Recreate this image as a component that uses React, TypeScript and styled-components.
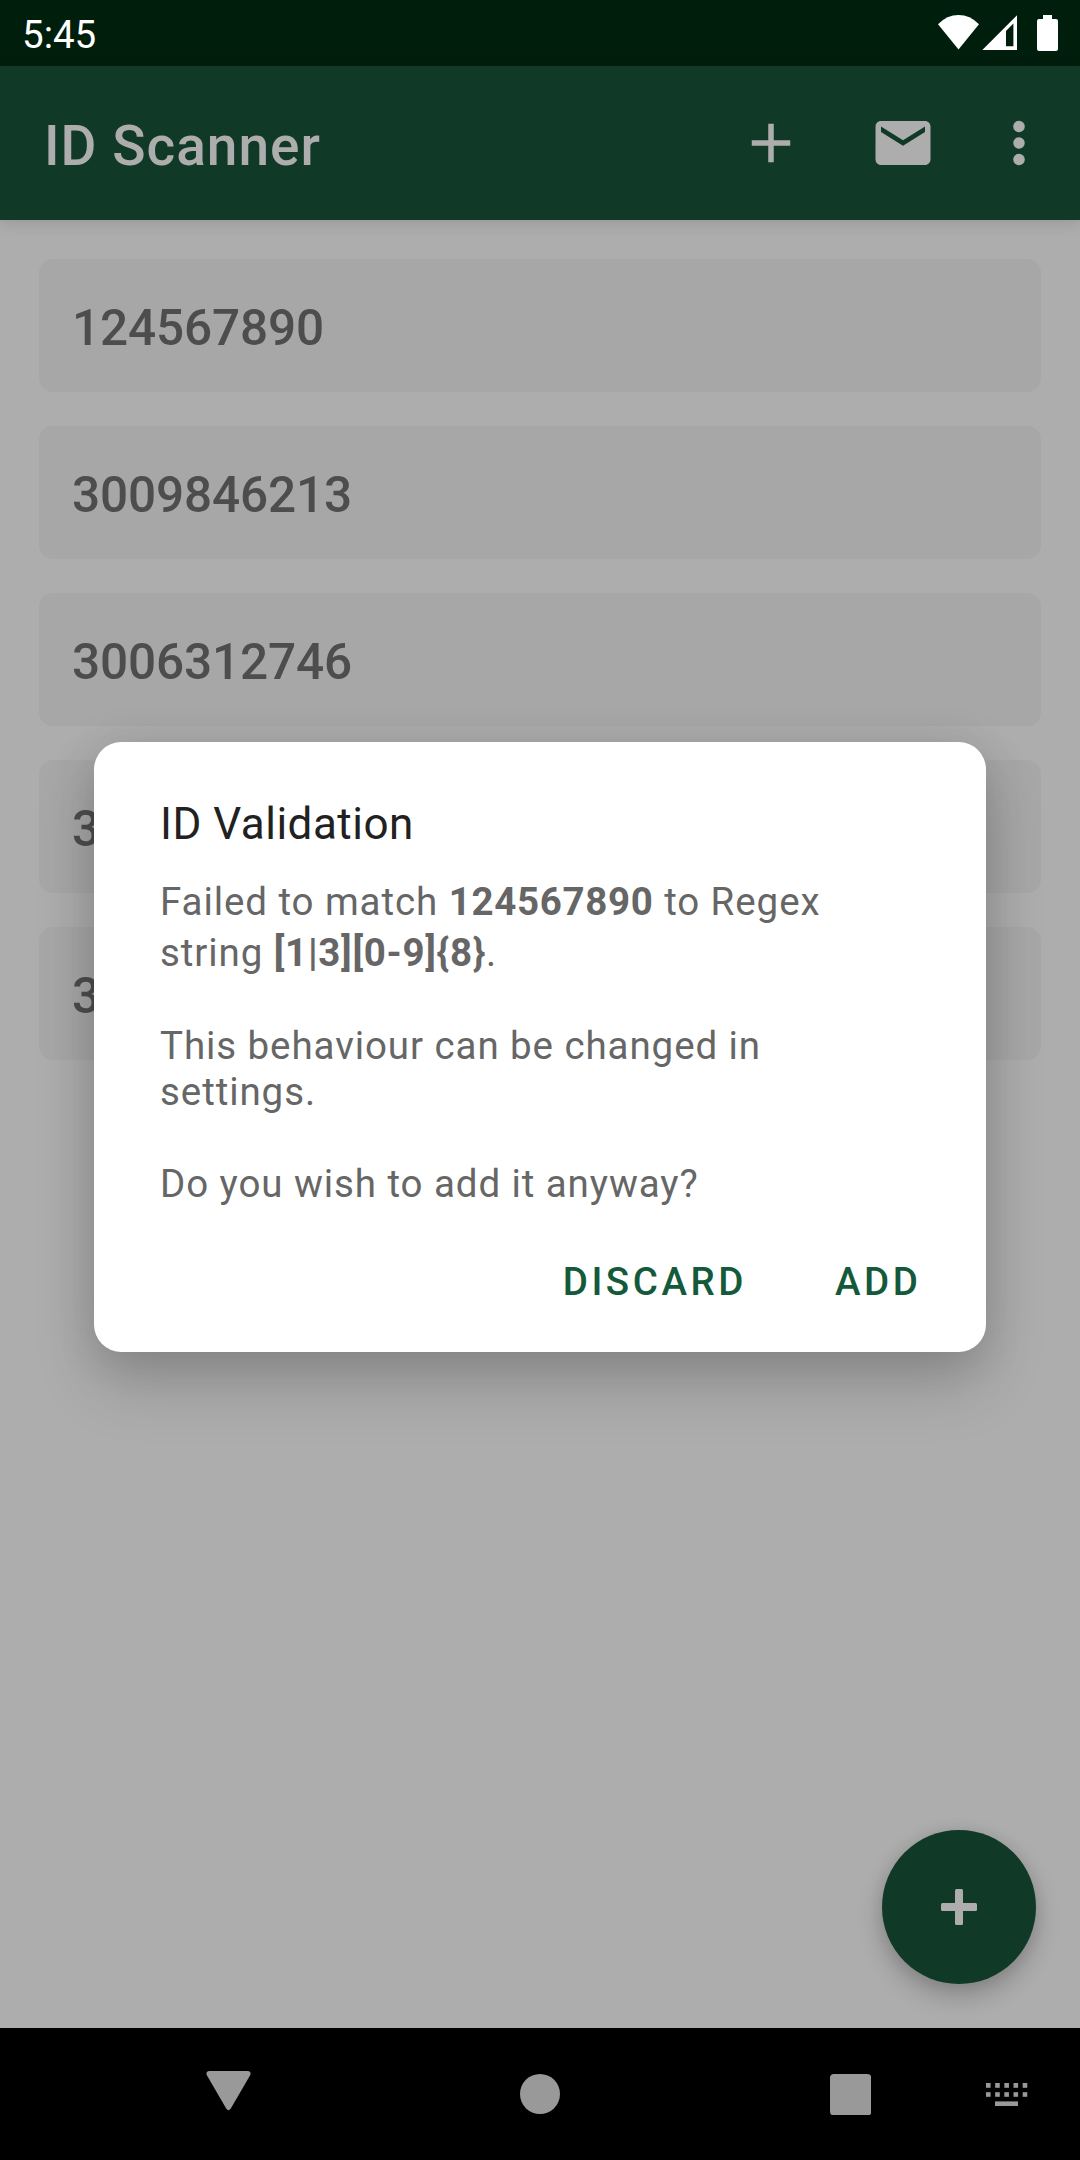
import React from "react";
import styled, { createGlobalStyle } from "styled-components";

const color = {
  status: "#001e0c",
  primary: "#103a27",
  action: "#145a3a",
  page: "#adadad",
  card: "#a7a7a7",
  cardText: "#4d4d4d",
  nav: "#999999",
};

const GlobalStyle = createGlobalStyle`
  * { box-sizing: border-box; }
  body { margin: 0; background: ${color.page}; }
  button { border: 0; padding: 0; background: none; font: inherit; color: inherit; }
  svg { display: block; flex: none; }
`;

const Screen = styled.div`
  position: relative;
  display: flex;
  flex-direction: column;
  width: 1080px;
  height: 2160px;
  overflow: hidden;
  background: ${color.page};
  font-family: Roboto, "Liberation Sans", sans-serif;
`;

const StatusBar = styled.header`
  display: flex;
  flex: none;
  justify-content: space-between;
  height: 66px;
  padding: 0 22px;
  background: ${color.status};
  color: #fff;
`;

const Clock = styled.span`
  font-size: 38.5px;
  line-height: 70px;
`;

const StatusIcons = styled.div`
  display: flex;
  padding-top: 15px;
`;

const AppBar = styled.div`
  display: flex;
  flex: none;
  align-items: center;
  height: 154px;
  padding: 0 28px 0 44px;
  background: ${color.primary};
  color: ${color.page};
  box-shadow: 0 3px 14px rgba(0, 0, 0, 0.12);
  z-index: 1;
`;

const AppTitle = styled.h1`
  flex: 1;
  margin: 0;
  font-size: 55px;
  font-weight: 500;
  line-height: 64px;
  padding-top: 5px;
  letter-spacing: 1px;
`;

const IconButton = styled.button<{ $gap: number }>`
  width: 66px;
  height: 66px;
  margin-left: ${(p) => p.$gap}px;
`;

const List = styled.ul`
  display: flex;
  flex: 1;
  flex-direction: column;
  gap: 34px;
  margin: 0;
  padding: 39px;
  list-style: none;
`;

const Card = styled.li`
  height: 133px;
  padding: 3px 33px 0;
  border-radius: 14px;
  background: ${color.card};
  color: ${color.cardText};
  font-size: 49.5px;
  font-weight: 500;
  line-height: 133px;
  letter-spacing: -0.12px;
`;

const Fab = styled.button`
  position: absolute;
  right: 44px;
  bottom: 176px;
  display: grid;
  place-items: center;
  width: 154px;
  height: 154px;
  border-radius: 50%;
  background: ${color.primary};
  color: ${color.page};
  box-shadow: 0 12px 24px rgba(0, 0, 0, 0.22), 0 0 14px rgba(0, 0, 0, 0.08);
`;

const Dialog = styled.section`
  position: absolute;
  top: 742px;
  left: 94px;
  width: 892px;
  height: 610px;
  padding: 56px 66px 0;
  border-radius: 27.5px;
  background: #fff;
  box-shadow: 0 33px 60px rgba(0, 0, 0, 0.17), 0 4px 46px rgba(0, 0, 0, 0.12);
  z-index: 2;
`;

const DialogTitle = styled.h2`
  margin: 0 0 26px;
  color: #212121;
  font-size: 44px;
  font-weight: 400;
  line-height: 52px;
  letter-spacing: 0.5px;
`;

const Message = styled.p<{ $line?: number; $after?: number }>`
  margin: 0 0 ${(p) => p.$after ?? 46}px;
  color: #666;
  font-size: 38.5px;
  line-height: ${(p) => p.$line ?? 46}px;
  letter-spacing: 0.92px;

  b {
    letter-spacing: 0.69px;
  }
`;

const Actions = styled.div`
  display: flex;
  justify-content: flex-end;
  gap: 88px;
  margin: 53px -1.4px 0 0;
`;

const TextButton = styled.button`
  color: ${color.action};
  font-size: 38.5px;
  font-weight: 500;
  line-height: 44px;
  letter-spacing: 3.55px;
`;

const NavBar = styled.nav`
  display: flex;
  flex: none;
  height: 132px;
  padding: 0 51px 0 206px;
  background: #000;
  color: ${color.nav};
`;

const NavButton = styled.button<{ $top: number; $gap: number }>`
  display: flex;
  align-items: flex-start;
  padding-top: ${(p) => p.$top}px;
  margin-right: ${(p) => p.$gap}px;
`;

const ids = ["124567890", "3009846213", "3006312746", "3", "3"];

const MailPath =
  "M20 4H4c-1.1 0-1.99.9-1.99 2L2 18c0 1.1.9 2 2 2h16c1.1 0 2-.9 2-2V6c0-1.1-.9-2-2-2zm0 4l-8 5-8-5V6l8 5 8-5v2z";

export default function App() {
  return (
    <Screen>
      <GlobalStyle />
      <StatusBar>
        <Clock>5:45</Clock>
        <StatusIcons>
          <svg width="120" height="36" viewBox="938 15 120 36" fill="currentColor">
            <path d="M938 24.2Q947 15 958.5 15T979 24.2L958.5 49.5Z" />
            <path
              fillRule="evenodd"
              d="M982.3 50L1017 15.3V50ZM1006 31V46.3H1013.4V23.6Z"
            />
            <path d="M1043 15h9v4h4q2 0 2 2v28q0 2-2 2h-17q-2 0-2-2V21q0-2 2-2h4z" />
          </svg>
        </StatusIcons>
      </StatusBar>

      <AppBar>
        <AppTitle>ID Scanner</AppTitle>
        <IconButton $gap={0} aria-label="Add">
          <svg width="66" height="66" viewBox="0 0 24 24" fill="currentColor">
            <path d="M19 13h-6v6h-2v-6H5v-2h6V5h2v6h6v2z" />
          </svg>
        </IconButton>
        <IconButton $gap={66} aria-label="Send by mail">
          <svg width="66" height="66" viewBox="0 0 24 24" fill="currentColor">
            <path d={MailPath} />
          </svg>
        </IconButton>
        <IconButton $gap={50} aria-label="More options">
          <svg width="66" height="66" viewBox="0 0 24 24" fill="currentColor">
            <circle cx="12" cy="6" r="2.1" />
            <circle cx="12" cy="12" r="2.1" />
            <circle cx="12" cy="18" r="2.1" />
          </svg>
        </IconButton>
      </AppBar>

      <List>
        {ids.map((id, index) => (
          <Card key={index}>{id}</Card>
        ))}
      </List>

      <Fab aria-label="Scan">
        <svg width="36" height="36" viewBox="0 0 36 36" fill="currentColor">
          <rect x="14" width="8" height="36" rx="1.5" />
          <rect y="14" width="36" height="8" rx="1.5" />
        </svg>
      </Fab>

      <Dialog role="dialog">
        <DialogTitle>ID Validation</DialogTitle>
        <Message $line={51} $after={45}>
          Failed to match <b>124567890</b> to Regex
          <br />
          string <b>[1|3][0-9]&#123;8&#125;</b>.
        </Message>
        <Message>
          This behaviour can be changed in
          <br />
          settings.
        </Message>
        <Message>Do you wish to add it anyway?</Message>
        <Actions>
          <TextButton>DISCARD</TextButton>
          <TextButton>ADD</TextButton>
        </Actions>
      </Dialog>

      <NavBar>
        <NavButton $top={43} $gap={269} aria-label="Back">
          <svg width="45" height="40" viewBox="0 0 45 40" fill="currentColor">
            <path d="M3.4 0H41.6Q45.8 .6 44 4.6L24.8 37.6Q22.5 41 20.2 37.6L1 4.6Q-.8 .6 3.4 0Z" />
          </svg>
        </NavButton>
        <NavButton $top={46} $gap={270} aria-label="Home">
          <svg width="40" height="40" viewBox="0 0 40 40" fill="currentColor">
            <circle cx="20" cy="20" r="20" />
          </svg>
        </NavButton>
        <NavButton $top={46} $gap={115} aria-label="Recents">
          <svg width="41.4" height="41.4" viewBox="0 0 41.4 41.4" fill="currentColor">
            <rect width="41.4" height="41.4" rx="4" />
          </svg>
        </NavButton>
        <NavButton $top={55} $gap={0} aria-label="Keyboard">
          <svg width="42" height="24" viewBox="0 0 42 24" fill="currentColor">
            {[0, 9.17, 18.34, 27.5, 36.67].map((x) => (
              <g key={x}>
                <rect x={x} y="0" width="4.6" height="4.8" />
                <rect x={x} y="9.2" width="4.6" height="4.6" />
              </g>
            ))}
            <rect x="9" y="18.4" width="23" height="4.6" />
          </svg>
        </NavButton>
      </NavBar>
    </Screen>
  );
}
